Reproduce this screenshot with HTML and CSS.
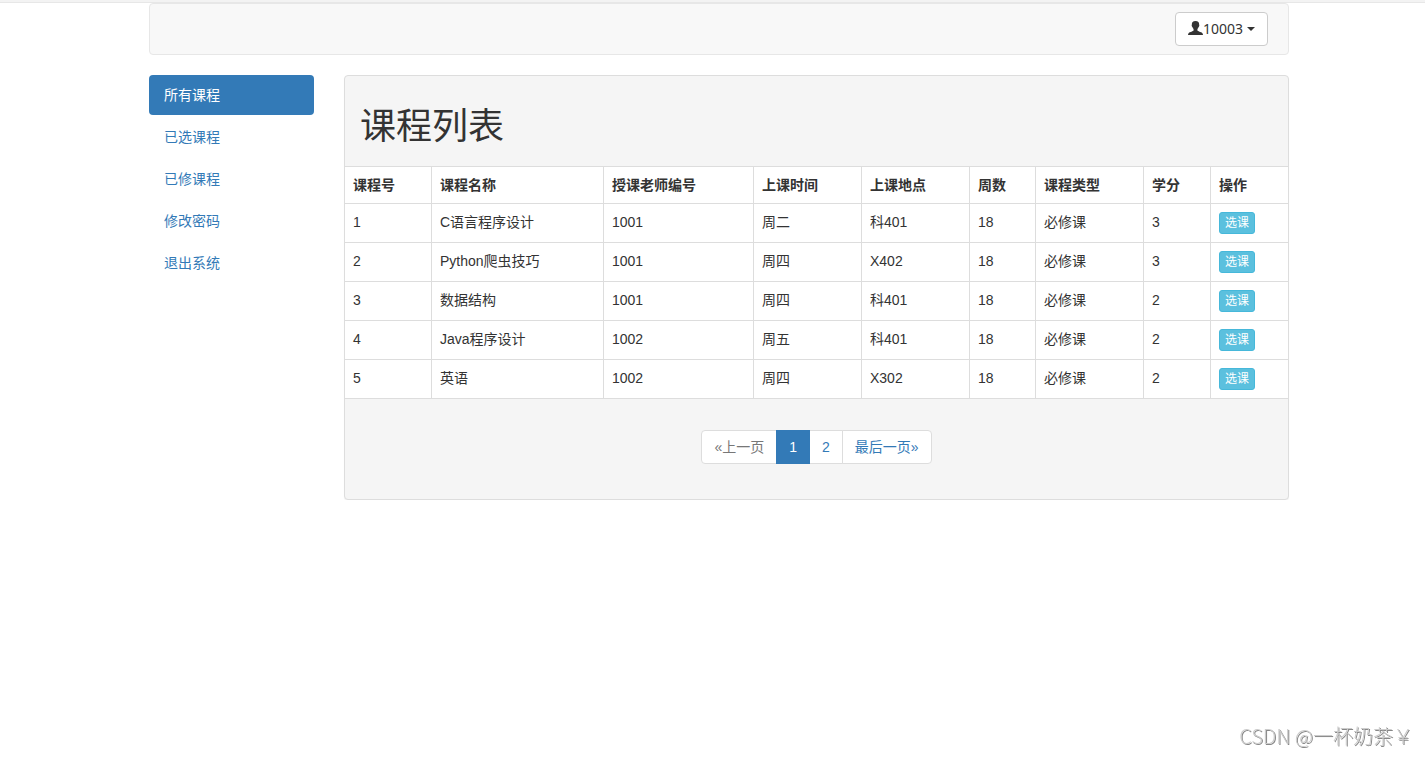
FILE: index.html
```html
<!DOCTYPE html>
<html lang="zh-CN">
<head>
<meta charset="utf-8">
<title>课程列表</title>
<link rel="stylesheet" href="styles.css">
</head>
<body>
<div class="top-strip"></div>
<div class="container">
  <header class="navbar">
    <button type="button" class="user-button" aria-haspopup="true">
      <svg class="user-icon" viewBox="0 0 14 14" preserveAspectRatio="none" aria-hidden="true"><path d="M7 0C4.500 0 3.500 1.400 3.600 3.500C3.600 4 3.300 4.200 3.500 4.900C3.700 5.500 4 5.700 4.200 6.300C4.400 7.100 4.900 7.600 5.200 8V9.500C5 10.300 1.800 10.900.7 12C.2 12.500 0 13.200 0 14H14C14 13.200 13.800 12.500 13.300 12C12.200 10.900 9 10.300 8.800 9.500V8C9.100 7.600 9.600 7.100 9.800 6.300C10 5.700 10.300 5.500 10.500 4.900C10.700 4.200 10.400 4 10.400 3.500C10.500 1.400 9.500 0 7 0Z"/></svg>
      <span>10003</span>
      <span class="caret"></span>
    </button>
  </header>
  <div class="columns">
    <nav class="sidebar">
      <a class="side-link active" href="#">所有课程</a>
      <a class="side-link" href="#">已选课程</a>
      <a class="side-link" href="#">已修课程</a>
      <a class="side-link" href="#">修改密码</a>
      <a class="side-link" href="#">退出系统</a>
    </nav>
    <main class="panel">
      <div class="panel-heading"><h1>课程列表</h1></div>
      <table class="courses">
        <colgroup>
          <col class="c-id"><col class="c-name"><col class="c-teacher"><col class="c-text"><col class="c-text"><col class="c-weeks"><col class="c-text"><col class="c-credit"><col class="c-action">
        </colgroup>
        <thead>
          <tr><th>课程号</th><th>课程名称</th><th>授课老师编号</th><th>上课时间</th><th>上课地点</th><th>周数</th><th>课程类型</th><th>学分</th><th>操作</th></tr>
        </thead>
        <tbody>
          <tr><td>1</td><td>C语言程序设计</td><td>1001</td><td>周二</td><td>科401</td><td>18</td><td>必修课</td><td>3</td><td><button type="button" class="pick">选课</button></td></tr>
          <tr><td>2</td><td>Python爬虫技巧</td><td>1001</td><td>周四</td><td>X402</td><td>18</td><td>必修课</td><td>3</td><td><button type="button" class="pick">选课</button></td></tr>
          <tr><td>3</td><td>数据结构</td><td>1001</td><td>周四</td><td>科401</td><td>18</td><td>必修课</td><td>2</td><td><button type="button" class="pick">选课</button></td></tr>
          <tr><td>4</td><td>Java程序设计</td><td>1002</td><td>周五</td><td>科401</td><td>18</td><td>必修课</td><td>2</td><td><button type="button" class="pick">选课</button></td></tr>
          <tr><td>5</td><td>英语</td><td>1002</td><td>周四</td><td>X302</td><td>18</td><td>必修课</td><td>2</td><td><button type="button" class="pick">选课</button></td></tr>
        </tbody>
      </table>
      <div class="panel-footer">
        <nav class="pagination" aria-label="分页">
          <a class="page disabled" href="#">«上一页</a>
          <a class="page current" href="#">1</a>
          <a class="page" href="#">2</a>
          <a class="page" href="#">最后一页»</a>
        </nav>
      </div>
    </main>
  </div>
</div>
<div class="watermark">CSDN @一杯奶茶￥</div>
</body>
</html>
```
FILE: styles.css
```css
* { box-sizing: border-box; }
body {
  margin: 0;
  background: #fff;
  color: #333;
  font: 14px/20px "Liberation Sans", "Noto Sans CJK SC", sans-serif;
}
a { color: #337ab7; text-decoration: none; }
.top-strip { height: 3px; background: #f3f3f3; border-bottom: 1px solid #e7e7e7; }
.container { max-width: 1289px; margin: 0 auto; padding: 0 68px 0 81px; }
.navbar {
  display: flex;
  align-items: center;
  justify-content: flex-end;
  min-height: 52px;
  margin-bottom: 20px;
  padding: 8px 20px;
  background: #f8f8f8;
  border: 1px solid #e7e7e7;
  border-radius: 4px;
}
.user-button {
  display: flex;
  align-items: center;
  height: 34px;
  padding: 0 12px;
  background: #fff;
  border: 1px solid #ccc;
  border-radius: 4px;
  color: #333;
  font: 14px/20px "Noto Sans", sans-serif;
}
.user-icon { width: 15px; height: 14px; margin-bottom: 2px; fill: #333; }
.caret {
  margin-left: 4px;
  border-top: 4px solid #333;
  border-left: 4px solid transparent;
  border-right: 4px solid transparent;
}
.columns { display: grid; grid-template-columns: 165px 1fr; gap: 30px; align-items: start; }
.sidebar { display: flex; flex-direction: column; gap: 2px; }
.side-link { padding: 10px 15px; border-radius: 4px; }
.side-link.active { background: #337ab7; color: #fff; }
.panel {
  background: #f5f5f5;
  border: 1px solid #ddd;
  border-radius: 4px;
  box-shadow: 0 1px 1px rgba(0, 0, 0, .05);
}
.panel-heading { padding: 31px 15px 19px; }
h1 { margin: 0; font-size: 36px; line-height: 40px; font-weight: 400; }
.courses {
  width: 100%;
  table-layout: fixed;
  border-collapse: separate;
  border-spacing: 0;
  background: #fff;
  border-top: 1px solid #ddd;
}
.c-id { width: 87px; }
.c-name { width: 172px; }
.c-teacher { width: 150px; }
.c-text { width: 108px; }
.c-weeks { width: 66px; }
.c-credit { width: 67px; }
.c-action { width: 77px; }
th, td {
  padding: 8px;
  text-align: left;
  vertical-align: top;
  border-right: 1px solid #ddd;
  border-bottom: 1px solid #ddd;
}
th:last-child, td:last-child { border-right: 0; }
.pick {
  display: block;
  height: 22px;
  padding: 0 5px;
  background: #5bc0de;
  border: 1px solid #46b8da;
  border-radius: 3px;
  color: #fff;
  font: 12px/18px "Liberation Sans", "Noto Sans CJK SC", sans-serif;
}
.panel-footer { display: flex; justify-content: center; padding: 31px 15px 35px; }
.pagination { display: flex; }
.page {
  margin-left: -1px;
  padding: 6px 12px;
  background: #fff;
  border: 1px solid #ddd;
}
.page:first-child { margin-left: 0; border-radius: 4px 0 0 4px; }
.page:last-child { border-radius: 0 4px 4px 0; }
.page.disabled { color: #777; }
.page.current { z-index: 1; background: #337ab7; border-color: #337ab7; color: #fff; }
.watermark {
  position: fixed;
  right: 12px;
  bottom: 10px;
  color: #ccc;
  font: 300 20px/24px "Noto Sans CJK SC", sans-serif;
  text-shadow: 1px 1px 0 #888;
}
```
